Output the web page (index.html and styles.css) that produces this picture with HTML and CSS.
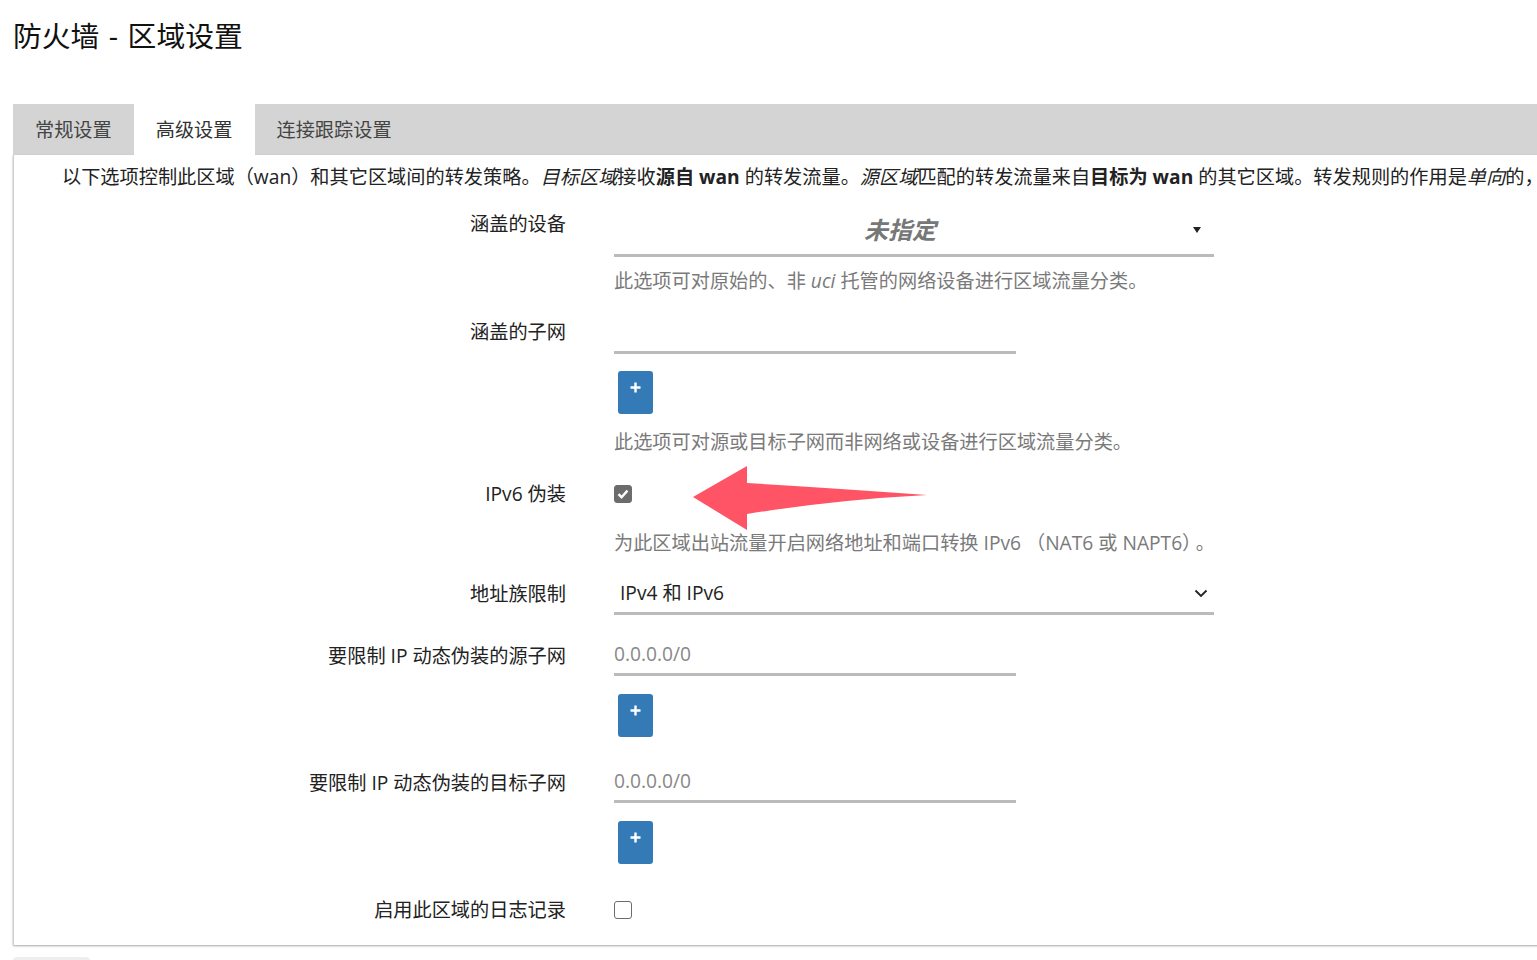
FILE: index.html
```html
<!DOCTYPE html>
<html lang="zh-CN">
<head>
<meta charset="utf-8">
<title>防火墙 - 区域设置</title>
<link rel="stylesheet" href="styles.css">
</head>
<body>
<div class="page">
  <h2 class="title">防火墙 - 区域设置</h2>

  <ul class="tabs">
    <li class="tab">常规设置</li>
    <li class="tab active">高级设置</li>
    <li class="tab">连接跟踪设置</li>
  </ul>

  <div class="panel">
    <div class="desc">以下选项控制此区域（wan）和其它区域间的转发策略。<em>目标区域</em>接收<b>源自 wan</b> 的转发流量。<em>源区域</em>匹配的转发流量来自<b>目标为 wan</b> 的其它区域。转发规则的作用是<em>单向</em>的，例如，一条允许从 lan 到 wan 的转发规则并不隐含有允许相反方向从 wan 到 lan 的流量转发。</div>

    <div class="row row-devices">
      <div class="label lbl-select">涵盖的设备</div>
      <div class="field">
        <div class="select select-big">
          <span class="select-value placeholder-big">未指定</span>
          <svg class="caret" width="10" height="8" viewBox="0 0 10 8"><path d="M1 1h8L5 7z" fill="#222"/></svg>
        </div>
        <div class="help help-1">此选项可对原始的、非 <em>uci</em> 托管的网络设备进行区域流量分类。</div>
      </div>
    </div>

    <div class="row row-subnet">
      <div class="label lbl-input">涵盖的子网</div>
      <div class="field">
        <div class="input"></div>
        <button class="add"><svg width="11" height="11" viewBox="0 0 11 11"><path d="M5.5 0.5v10M0.5 5.5h10" stroke="#fff" stroke-width="2.4"/></svg></button>
        <div class="help help-2">此选项可对源或目标子网而非网络或设备进行区域流量分类。</div>
      </div>
    </div>

    <div class="row row-masq6">
      <div class="label">IPv6 伪装</div>
      <div class="field field-arrow">
        <div class="check-wrap">
          <span class="checkbox checked"><svg width="12" height="10" viewBox="0 0 12 10"><path d="M1.5 5.2l3 3L10.5 1.6" fill="none" stroke="#fff" stroke-width="2.4"/></svg></span>
        </div>
        <svg class="pointer" width="240" height="66" viewBox="0 0 240 66"><path d="M0 31 L54 0 L54 17 Q140 22 234 29 Q140 34 54 48 L54 64 Z" fill="#fe5466"/></svg>
        <div class="help help-3">为此区域出站流量开启网络地址和端口转换 IPv6 （NAT6 或 NAPT6）<span class="stop">。</span></div>
      </div>
    </div>

    <div class="row row-family">
      <div class="label lbl-family">地址族限制</div>
      <div class="field">
        <div class="select select-family">
          <span class="select-value">IPv4 和 IPv6</span>
          <svg class="chevron" width="14" height="9" viewBox="0 0 14 9"><path d="M1.5 1.5l5.5 5.5 5.5-5.5" fill="none" stroke="#222" stroke-width="1.8"/></svg>
        </div>
      </div>
    </div>

    <div class="row row-src">
      <div class="label lbl-ip">要限制 IP 动态伪装的源子网</div>
      <div class="field">
        <div class="input"><span class="ph">0.0.0.0/0</span></div>
        <button class="add"><svg width="11" height="11" viewBox="0 0 11 11"><path d="M5.5 0.5v10M0.5 5.5h10" stroke="#fff" stroke-width="2.4"/></svg></button>
      </div>
    </div>

    <div class="row row-dst">
      <div class="label lbl-ip">要限制 IP 动态伪装的目标子网</div>
      <div class="field">
        <div class="input"><span class="ph">0.0.0.0/0</span></div>
        <button class="add"><svg width="11" height="11" viewBox="0 0 11 11"><path d="M5.5 0.5v10M0.5 5.5h10" stroke="#fff" stroke-width="2.4"/></svg></button>
      </div>
    </div>

    <div class="row row-log">
      <div class="label">启用此区域的日志记录</div>
      <div class="field">
        <div class="check-wrap"><span class="checkbox"></span></div>
      </div>
    </div>
  </div>

  <div class="footer-btn"></div>
</div>
</body>
</html>
```

FILE: styles.css
```css
html, body {
  margin: 0;
  padding: 0;
  overflow: hidden;
  background: #fff;
}
body {
  font-family: "Open Sans", "Noto Sans CJK SC", sans-serif;
  font-size: 19.2px;
  color: #222;
}
.page {
  padding-left: 13px;
}
.title {
  margin: 0;
  padding-top: 16px;
  font-size: 28.8px;
  font-weight: normal;
  line-height: 40px;
  color: #111;
  height: 88px;
  word-spacing: 2px;
}
.tabs {
  list-style: none;
  margin: 0 -40px 0 0;
  padding: 0;
  display: flex;
  background: #d4d4d4;
  height: 51px;
}
.tab {
  padding: 0 22px;
  line-height: 51px;
  color: #444;
  white-space: nowrap;
}
.active {
  background: #fff;
  color: #333;
}
.panel {
  background: #fff;
  border-left: 1px solid #d0d0d0;
  margin-right: -40px;
  padding: 9px 0 22px;
  box-shadow: 0 1px 2px rgba(0, 0, 0, 0.35);
  overflow: hidden;
}
.desc {
  padding-left: 48px;
  line-height: 26px;
  white-space: nowrap;
  color: #222;
}
.desc b {
  font-weight: bold;
}
.row {
  display: grid;
  grid-template-columns: 552px 1fr;
  column-gap: 48px;
  align-items: start;
}
.label {
  text-align: right;
  line-height: 26px;
  white-space: nowrap;
}
.field {
  display: flex;
  flex-direction: column;
  align-items: flex-start;
}
.row-devices { margin-top: 15px; }
.row-subnet { margin-top: 18px; }
.row-masq6 { margin-top: 26px; }
.row-family { margin-top: 17px; }
.row-src { margin-top: 20px; }
.row-dst { margin-top: 25px; }
.row-log { margin-top: 33px; }

.lbl-select { padding-top: 6px; }
.lbl-input { padding-top: 7px; }
.lbl-family { padding-top: 8px; }
.lbl-ip { padding-top: 8px; }

.select {
  width: 600px;
  box-sizing: border-box;
  border-bottom: 3px solid #bbb;
  display: flex;
  align-items: center;
  position: relative;
}
.select-big {
  height: 52px;
  justify-content: center;
  padding-right: 28px;
}
.placeholder-big {
  font-size: 24px;
  font-weight: bold;
  font-style: italic;
  color: #777;
  line-height: 49px;
}
.caret {
  position: absolute;
  right: 12px;
  top: 21px;
}
.select-family {
  height: 42px;
  padding-left: 6px;
}
.select-family .select-value {
  color: #222;
  line-height: 39px;
}
.chevron {
  position: absolute;
  right: 6px;
  top: 16px;
}
.input {
  width: 402px;
  height: 42px;
  box-sizing: border-box;
  border-bottom: 3px solid #bbb;
  display: flex;
  align-items: center;
}
.row-src .input,
.row-dst .input {
  height: 41px;
}
.ph {
  color: #888;
  line-height: 38px;
}
.add {
  margin: 17px 0 0 4px;
  width: 35px;
  height: 43px;
  padding: 11px 0 0;
  border: none;
  border-radius: 3px;
  background: #337ab7;
  display: flex;
  justify-content: center;
  align-items: flex-start;
}
.row-src .add,
.row-dst .add {
  margin-top: 18px;
}
.help {
  color: #7a7a7a;
  line-height: 26px;
  white-space: nowrap;
}
.help-1 { margin-top: 11px; }
.help-2 { margin-top: 15px; }
.help-3 { margin-top: 23px; }
.stop {
  margin-left: 4px;
}
.check-wrap {
  height: 26px;
  display: flex;
  align-items: center;
}
.checkbox {
  width: 18px;
  height: 18px;
  box-sizing: border-box;
  border: 1.6px solid #6c6c6c;
  border-radius: 3px;
  background: #fff;
  display: flex;
  align-items: center;
  justify-content: center;
}
.checkbox.checked {
  background: #6c6c6c;
}
.field-arrow {
  position: relative;
}
.pointer {
  position: absolute;
  left: 79px;
  top: -15px;
}
.footer-btn {
  margin-top: 12px;
  width: 77px;
  height: 30px;
  border-radius: 4px;
  background: #eee;
}
```
